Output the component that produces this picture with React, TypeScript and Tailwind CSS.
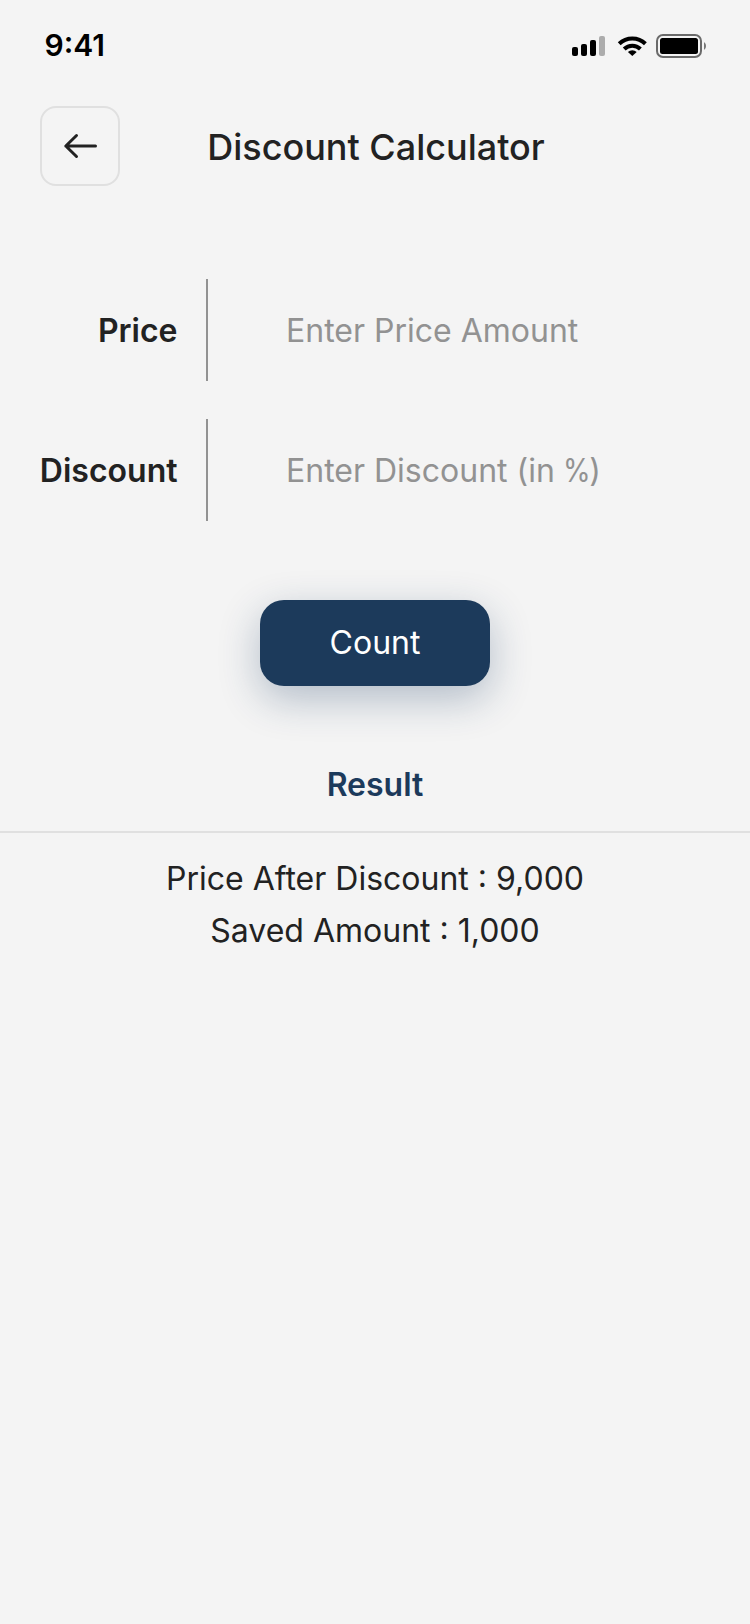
import type { ReactNode } from "react";

function StatusIcons() {
  return (
    <svg width="138" height="28" viewBox="570 32 138 28" fill="none" aria-hidden="true">
      <rect x="572" y="47" width="6" height="9" rx="2" fill="#000" />
      <rect x="581" y="44" width="6" height="12" rx="2" fill="#000" />
      <rect x="590" y="40" width="6" height="16" rx="2" fill="#000" />
      <rect x="599" y="36" width="6" height="20" rx="2" fill="#acacac" />
      <g stroke="#000" strokeWidth="4">
        <path d="M619.2 43.8a18.7 18.7 0 0 1 26.2 0" />
        <path d="M624.2 49a11.6 11.6 0 0 1 16.2 0" />
      </g>
      <path d="M632.3 56l-4.4-4.1a6.6 6.6 0 0 1 8.8 0z" fill="#000" />
      <rect x="657" y="35" width="44" height="22" rx="6" stroke="#6a6a6a" strokeWidth="2" />
      <rect x="660" y="38" width="38" height="16" rx="2.5" fill="#000" />
      <path d="M704 42.2c1.2.6 2 2 2 3.8s-.8 3.2-2 3.8z" fill="#777" />
    </svg>
  );
}

function BackIcon() {
  return (
    <svg width="36" height="28" viewBox="0 0 36 28" fill="none" stroke="#222" strokeWidth="3" strokeLinecap="round" strokeLinejoin="round" aria-hidden="true">
      <path d="M33.5 14H3.8M14.5 3.5L3.8 14l10.7 10.5" />
    </svg>
  );
}

function Field({ label, hint }: { label: string; hint: ReactNode }) {
  return (
    <div className="flex h-[102px] items-center">
      <span className="w-[177.5px] pt-0.5 text-right font-semibold text-[#222]">{label}</span>
      <span className="ml-[28.5px] h-full w-0.5 bg-[#929292]" />
      <span className="ml-[78px] pt-0.5 text-[#929292]">{hint}</span>
    </div>
  );
}

export default function App() {
  return (
    <div className="flex min-h-[1624px] w-[750px] flex-col bg-[#f4f4f4] font-['Inter',sans-serif] text-[32px] leading-[52px] text-[#222]">
      <div className="flex h-[90px] items-center justify-between pt-0.5 pr-[42px] pl-[44.5px]">
        <span className="mb-0.5 text-[30px] leading-9 font-semibold text-black">9:41</span>
        <StatusIcons />
      </div>
      <header className="mt-4 grid h-20 grid-cols-[80px_1fr_80px] items-center px-10">
        <button className="flex size-20 items-center justify-center rounded-2xl border-2 border-[#e0e0e0]">
          <BackIcon />
        </button>
        <h1 className="pt-0.5 pl-0.5 text-center text-4xl font-medium leading-[52px]">Discount Calculator</h1>
      </header>
      <main className="flex flex-col items-center">
        <div className="mt-[93px] flex w-full flex-col gap-[38px]">
          <Field label="Price" hint="Enter Price Amount" />
          <Field
            label="Discount"
            hint={<>Enter Discount (in <span className="-mx-[3px] inline-block scale-x-[0.88]">%</span>)</>}
          />
        </div>
        <button className="mt-[79px] h-[86px] w-[230px] rounded-3xl bg-[#1c3a5b] text-white shadow-[0_13px_40px_rgba(28,58,100,0.3)]">Count</button>
        <h2 className="mt-[73px] font-semibold text-[#1c3a5b]">Result</h2>
        <section className="mt-5 flex w-full flex-col items-center border-t-2 border-[#e0e0e0] pt-5">
          <p>Price After Discount : 9,000</p>
          <p>Saved Amount : 1,000</p>
        </section>
      </main>
    </div>
  );
}
